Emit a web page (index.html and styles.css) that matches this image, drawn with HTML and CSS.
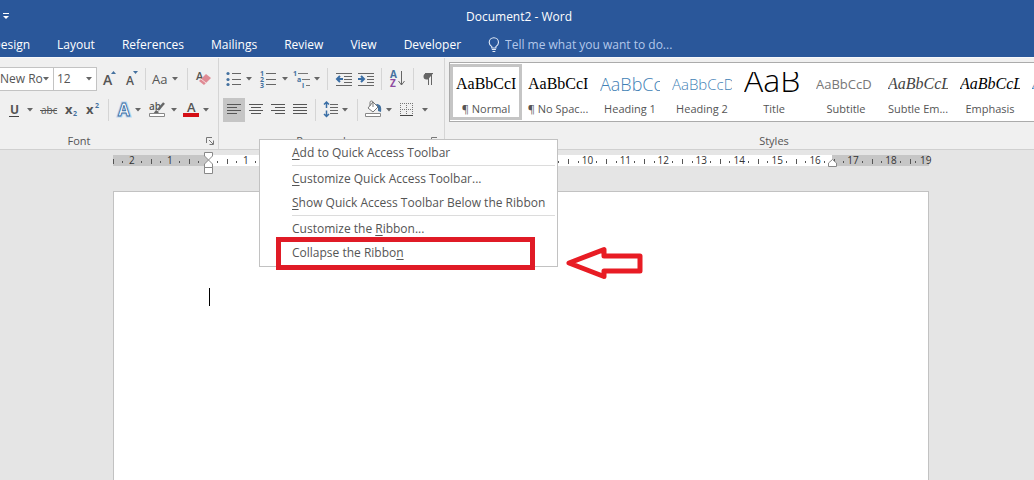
FILE: index.html
```html
<!DOCTYPE html>
<html lang="en">
<head>
<meta charset="utf-8">
<title>Document2 - Word</title>
<link rel="stylesheet" href="styles.css">
</head>
<body>
<header class="titlebar">
  <div class="title-row">
    <button class="qat" aria-label="Customize Quick Access Toolbar"><svg width="8" height="8" viewBox="0 0 8 8"><path d="M1 .5h6" stroke="#fff"/><path d="M1 3h6L4 6z" fill="#fff"/></svg></button>
    <h1 class="doc-title">Document2 - Word</h1>
  </div>
  <nav class="tabs">
    <button class="tab">Design</button>
    <button class="tab">Layout</button>
    <button class="tab">References</button>
    <button class="tab">Mailings</button>
    <button class="tab">Review</button>
    <button class="tab">View</button>
    <button class="tab">Developer</button>
    <label class="tell">
      <svg width="12" height="16" viewBox="0 0 12 16" fill="none" stroke="#e4ecf8" stroke-width="1.1"><path d="M3.8 11V9.6C2.300 8.500 1.200 7.300 1.200 5.400a4.600 4.600 0 0 1 9.300 0c0 1.900-1.100 3.100-2.600 4.200V11zM3.800 12.500h4.100M4.500 14.500h2.800"/></svg>
      <input type="text" placeholder="Tell me what you want to do..." aria-label="Tell me what you want to do">
    </label>
  </nav>
</header>

<section class="ribbon" aria-label="Ribbon">
  <div class="group font-group">
    <div class="tools">
      <div class="row">
        <span class="combo face"><select aria-label="Font"><option>New Ro</option></select><svg class="arrow" viewBox="0 0 6 4"><path d="M0 0h6L3 3.500z"/></svg></span>
        <span class="combo size"><select aria-label="Font size"><option>12</option></select><svg class="arrow" viewBox="0 0 6 4"><path d="M0 0h6L3 3.500z"/></svg></span>
        <button class="tool first" aria-label="Grow font"><svg width="22" height="24" viewBox="0 0 22 24"><text x="4" y="18" class="g" font-size="14">A</text><path d="M12 7h5l-2.500-3z" fill="#44719f"/></svg></button>
        <button class="tool" aria-label="Shrink font"><svg width="20" height="24" viewBox="0 0 20 24"><text x="5" y="18" class="g" font-size="12">A</text><path d="M12 4h5l-2.500 3z" fill="#44719f"/></svg></button>
        <i class="sep"></i>
        <button class="tool" aria-label="Change case"><svg width="20" height="24" viewBox="0 0 20 24"><text x="3" y="17" class="m" font-size="13">Aa</text></svg></button>
        <button class="drop" aria-label="Case options"><svg class="arrow" viewBox="0 0 6 4"><path d="M0 0h6L3 3.500z"/></svg></button>
        <i class="sep wide"></i>
        <button class="tool" aria-label="Clear formatting"><svg width="20" height="24" viewBox="0 0 20 24"><text x="3" y="13" class="g" font-size="11">A</text><path d="m6 14 7-7 5 4-7 7z" fill="#df8a94"/><path d="m8 12 5 4" stroke="#f6d9dc"/></svg></button>
      </div>
      <div class="row inset">
        <button class="tool" aria-label="Underline"><svg width="20" height="24" viewBox="0 0 20 24"><text x="6" y="16" class="g b" font-size="12">U</text><path d="M5 18.500h10" stroke="#444"/></svg></button>
        <button class="drop" aria-label="Underline styles"><svg class="arrow" viewBox="0 0 6 4"><path d="M0 0h6L3 3.500z"/></svg></button>
        <button class="tool" aria-label="Strikethrough"><svg width="24" height="24" viewBox="0 0 24 24"><text x="5" y="16" class="m" font-size="10">abc</text><path d="M4 12.500h17" stroke="#555"/></svg></button>
        <button class="tool" aria-label="Subscript"><svg width="22" height="24" viewBox="0 0 22 24"><text x="5" y="16" class="g b" font-size="13">x</text><text x="13" y="18" class="n" font-size="7">2</text></svg></button>
        <button class="tool" aria-label="Superscript"><svg width="22" height="24" viewBox="0 0 22 24"><text x="4" y="16" class="g b" font-size="13">x</text><text x="13" y="10" class="n" font-size="7">2</text></svg></button>
        <i class="sep"></i>
        <button class="tool" aria-label="Text effects"><svg width="20" height="24" viewBox="0 0 20 24" font-weight="700"><text x="6" y="18" font-size="17" fill="#fff" stroke="#bcd8f0" stroke-width="3">A</text><text x="6" y="18" font-size="17" fill="#fff" stroke="#3a6ea5" stroke-width=".9">A</text></svg></button>
        <button class="drop" aria-label="Effect options"><svg class="arrow" viewBox="0 0 6 4"><path d="M0 0h6L3 3.500z"/></svg></button>
        <button class="tool" aria-label="Highlight"><svg width="24" height="24" viewBox="0 0 24 24"><text x="5" y="12" class="g" font-size="10">ab</text><path d="m20 5-6 7" stroke="#666" stroke-width="2.500"/><path d="m9 16 3-4 3 2-2 2z" fill="#666"/><path d="M5.500 15.500h15v3h-15z" fill="#fff" stroke="#888"/></svg></button>
        <button class="drop" aria-label="Highlight colors"><svg class="arrow" viewBox="0 0 6 4"><path d="M0 0h6L3 3.500z"/></svg></button>
        <button class="tool" aria-label="Font color"><svg width="20" height="24" viewBox="0 0 20 24"><text x="7" y="14" class="g" font-size="13">A</text><path d="M3 15h16v4H3z" fill="#d40f16"/></svg></button>
        <button class="drop" aria-label="Font colors"><svg class="arrow" viewBox="0 0 6 4"><path d="M0 0h6L3 3.500z"/></svg></button>
      </div>
    </div>
    <div class="caption font-caption"><span>Font</span><button class="launch" aria-label="Font settings"><svg width="8" height="8" viewBox="0 0 8 8" fill="none" stroke="#777"><path d="M.5 6V.5H6M3 3l4 4M7.500 3.500v4h-4"/></svg></button></div>
  </div>

  <div class="group para-group">
    <div class="tools">
      <div class="row">
        <button class="tool" aria-label="Bullets"><svg width="20" height="24" viewBox="0 0 20 24"><path d="M9 6.500h9M9 12.500h9M9 17.500h9" stroke="#666"/><g fill="#44719f"><circle cx="5" cy="6.500" r="1.600"/><circle cx="5" cy="12.500" r="1.600"/><circle cx="5" cy="17.500" r="1.600"/></g></svg></button>
        <button class="drop" aria-label="Bullet library"><svg class="arrow" viewBox="0 0 6 4"><path d="M0 0h6L3 3.500z"/></svg></button>
        <button class="tool" aria-label="Numbering"><svg width="24" height="24" viewBox="0 0 24 24"><path d="M11 6.500h10M11 12.500h10M11 17.500h10" stroke="#666"/><g class="n" font-size="7"><text x="5" y="9">1</text><text x="5" y="15">2</text><text x="5" y="21">3</text></g></svg></button>
        <button class="drop" aria-label="Numbering library"><svg class="arrow" viewBox="0 0 6 4"><path d="M0 0h6L3 3.500z"/></svg></button>
        <button class="tool" aria-label="Multilevel list"><svg width="20" height="24" viewBox="0 0 20 24"><path d="M7 6.500h10M11 12.500h8M15 18.500h4" stroke="#777"/><g class="n" font-size="7"><text x="2" y="9">1</text><text x="6" y="15">a</text><text x="11" y="21">i</text></g></svg></button>
        <button class="drop" aria-label="List library"><svg class="arrow" viewBox="0 0 6 4"><path d="M0 0h6L3 3.500z"/></svg></button>
        <i class="sep"></i>
        <button class="tool" aria-label="Decrease indent"><svg width="24" height="24" viewBox="0 0 24 24"><path d="M5 6.500h16M13 9.500h8M13 12.500h8M13 15.500h8M5 18.500h16" stroke="#666"/><path d="M12 12H6m3-3-3 3 3 3" fill="none" stroke="#3a6ea5" stroke-width="2"/></svg></button>
        <button class="tool" aria-label="Increase indent"><svg width="22" height="24" viewBox="0 0 22 24"><path d="M3 6.500h16M12 9.500h7M12 12.500h7M12 15.500h7M3 18.500h16" stroke="#666"/><path d="M3 12h6M6 9l3 3-3 3" fill="none" stroke="#3a6ea5" stroke-width="2"/></svg></button>
        <i class="sep"></i>
        <button class="tool" aria-label="Sort"><svg width="24" height="24" viewBox="0 0 24 24"><text x="5" y="11" font-size="10" class="n">A</text><text x="5" y="20" font-size="10" class="b" fill="#8d4aa0">Z</text><path d="M16.500 4v14m-3-4 3 4 3-4" fill="none" stroke="#666"/></svg></button>
        <i class="sep"></i>
        <button class="tool" aria-label="Show paragraph marks"><svg width="22" height="24" viewBox="0 0 22 24"><path d="M16 6.500H9.500a3 3 0 0 0 0 6H11" fill="#666"/><path d="M8 6.500h8M11.500 6v12M14.500 6v12" stroke="#666"/></svg></button>
      </div>
      <div class="row">
        <button class="tool on" aria-label="Align left"><svg width="22" height="24" viewBox="0 0 22 24"><path d="M4 6.500h14M4 9.500h10M4 12.500h14M4 15.500h10" stroke="#555"/></svg></button>
        <button class="tool" aria-label="Center"><svg width="22" height="24" viewBox="0 0 22 24"><path d="M4 6.500h14M6 9.500h10M4 12.500h14M6 15.500h10" stroke="#555"/></svg></button>
        <button class="tool" aria-label="Align right"><svg width="22" height="24" viewBox="0 0 22 24"><path d="M4 6.500h14M8 9.500h10M4 12.500h14M8 15.500h10" stroke="#555"/></svg></button>
        <button class="tool" aria-label="Justify"><svg width="22" height="24" viewBox="0 0 22 24"><path d="M4 6.500h14M4 9.500h14M4 12.500h14M4 15.500h14" stroke="#555"/></svg></button>
        <i class="sep"></i>
        <button class="tool" aria-label="Line spacing"><svg width="20" height="24" viewBox="0 0 20 24"><path d="M11 6.500h8M11 9.500h8M11 12.500h8M11 15.500h8" stroke="#666"/><path d="M7.500 10V4M5 6.500 7.500 4 10 6.500M7.500 12.500v6M5 16l2.500 2.500L10 16" fill="none" stroke="#3a6ea5" stroke-width="1.500"/></svg></button>
        <button class="drop" aria-label="Spacing options"><svg class="arrow" viewBox="0 0 6 4"><path d="M0 0h6L3 3.500z"/></svg></button>
        <i class="sep wide"></i>
        <button class="tool" aria-label="Shading"><svg width="20" height="24" viewBox="0 0 20 24"><path d="m5 10 5-6 5 5-5 5z" fill="#fff" stroke="#777"/><path d="M7 8V4.500a1.500 1.500 0 0 1 3 0V9" fill="none" stroke="#777"/><path d="M13 6c4 0 6 2 5 8l-3-1V9z" fill="#44719f"/><path d="M2.500 15.500h15v3h-15z" fill="#fff" stroke="#888"/></svg></button>
        <button class="drop" aria-label="Shading colors"><svg class="arrow" viewBox="0 0 6 4"><path d="M0 0h6L3 3.500z"/></svg></button>
        <button class="tool" aria-label="Borders"><svg width="24" height="24" viewBox="0 0 24 24" fill="none" stroke="#777"><path d="M5.500 5v12M11.500 5v12M17.500 5v12M5 5.500h13M5 11.500h13" stroke-dasharray="1 1"/><path d="M5 17.500h13" stroke="#444"/></svg></button>
        <button class="drop" aria-label="Border options"><svg class="arrow" viewBox="0 0 6 4"><path d="M0 0h6L3 3.500z"/></svg></button>
      </div>
    </div>
    <div class="caption para-caption"><span>Paragraph</span><button class="launch" aria-label="Paragraph settings"><svg width="8" height="8" viewBox="0 0 8 8" fill="none" stroke="#777"><path d="M.5 6V.5H6M3 3l4 4M7.500 3.500v4h-4"/></svg></button></div>
  </div>

  <div class="group style-group">
    <div class="gallery">
      <button class="style chosen"><span class="sample serif">AaBbCcI</span><span class="name">¶ Normal</span></button>
      <button class="style"><span class="sample serif">AaBbCcI</span><span class="name">¶ No Spac...</span></button>
      <button class="style"><span class="sample h1">AaBbCc</span><span class="name">Heading 1</span></button>
      <button class="style"><span class="sample h2">AaBbCcD</span><span class="name">Heading 2</span></button>
      <button class="style"><span class="sample title">AaB</span><span class="name">Title</span></button>
      <button class="style"><span class="sample subtitle">AaBbCcD</span><span class="name">Subtitle</span></button>
      <button class="style"><span class="sample serif subtle">AaBbCcL</span><span class="name">Subtle Em...</span></button>
      <button class="style"><span class="sample serif emphasis">AaBbCcL</span><span class="name">Emphasis</span></button>
      <button class="style"><span class="sample serif intense">AaBbCcL</span><span class="name">Intense E...</span></button>
    </div>
    <div class="caption style-caption"><span>Styles</span></div>
  </div>
</section>

<main class="desk">
  <div class="ruler">
    <ol class="marks">
      <li>2</li><li>1</li><li></li><li>1</li><li>2</li><li>3</li><li>4</li><li>5</li><li>6</li><li>7</li><li>8</li><li>9</li><li>10</li><li>11</li><li>12</li><li>13</li><li>14</li><li>15</li><li>16</li><li>17</li><li>18</li><li class="half">19</li>
    </ol>
    <svg class="indent-left" width="9" height="22" viewBox="0 0 9 22" fill="#fff" stroke="#888"><path d="M.5.500h8V4l-4 4-4-4zM.5 15.500V12l4-4 4 4v3.500zM.5 15.500h8v6h-8z"/></svg>
    <svg class="indent-right" width="9" height="8" viewBox="0 0 9 8" fill="#fff" stroke="#888"><path d="M.5 7.500V4l4-3.500 4 3.500v3.500z"/></svg>
  </div>
  <article class="page" aria-label="Document page"><span class="caret"></span></article>
</main>

<div class="menu" role="menu">
  <button class="item" role="menuitem"><u>A</u>dd to Quick Access Toolbar</button>
  <hr>
  <button class="item" role="menuitem"><u>C</u>ustomize Quick Access Toolbar...</button>
  <button class="item" role="menuitem"><u>S</u>how Quick Access Toolbar Below the Ribbon</button>
  <hr>
  <button class="item" role="menuitem">Customize the <u>R</u>ibbon...</button>
  <button class="item" role="menuitem">Collapse the Ribbo<u>n</u></button>
  <div class="callout"></div>
  <svg class="pointer" width="78" height="34" viewBox="0 0 78 34"><path d="M3 17 38 3.500V10h36v15H38v5.500z" fill="#fff" stroke="#e81c24" stroke-width="5" stroke-linejoin="round"/></svg>
</div>
</body>
</html>
```
FILE: styles.css
```css
* { box-sizing: border-box; }

body {
  margin: 0;
  min-height: 100vh;
  display: flex;
  flex-direction: column;
  overflow: hidden;
  position: relative;
  background: #e5e5e5;
  color: #555;
  font: 12px/16px "Open Sans", "Noto Sans", sans-serif;
}

button, input, select {
  margin: 0;
  padding: 0;
  border: 0;
  background: none;
  color: inherit;
  font: inherit;
}

svg { display: block; flex: none; }

.titlebar { background: #2a579a; color: #fff; }
.title-row { display: flex; align-items: center; height: 32px; padding: 2px 0 0 2px; }
.qat { width: 8px; }
.doc-title { flex: 1; margin: 0; padding-right: 6px; text-align: center; font-size: 12px; font-weight: 400; }
.tabs { display: flex; align-items: center; height: 25px; gap: 27px; margin-left: -8px; white-space: nowrap; }
.tell { display: flex; align-items: center; gap: 5px; flex: 1; }
.tell input { flex: 1; min-width: 0; outline: 0; }
.tell input::placeholder { color: #b3c8ea; opacity: 1; }

.ribbon { display: flex; height: 93px; background: #f0f0f0; border-top: 1px solid #f8f9fc; border-bottom: 1px solid #d0d0d0; }
.group { display: flex; flex-direction: column; flex: none; padding-top: 4px; }
.font-group { width: 219px; border-right: 1px solid #d5d5d5; }
.para-group { width: 226px; padding-left: 4px; border-right: 1px solid #d5d5d5; }
.group.style-group { flex: 1; min-width: 0; padding-left: 4px; justify-content: space-between; }
.tools { flex: 1; display: flex; flex-direction: column; gap: 7px; padding-top: 5px; }
.row { display: flex; align-items: center; height: 24px; }
.inset { padding-left: 4px; }
.combo { display: flex; align-items: center; height: 24px; padding-right: 4px; background: #fff; border: 1px solid #c3c3c3; }
.combo select { flex: 1; min-width: 0; appearance: none; outline: 0; }
.face { width: 54px; border-left: 0; }
.size { width: 43px; border-left: 0; padding-left: 3px; }
.arrow { width: 6px; height: 4px; fill: #666; }
.first { margin-left: 2px; }
.on { background: #c5c5c5; }
.drop { display: flex; justify-content: center; width: 12px; }
.sep { width: 8px; height: 22px; background: linear-gradient(#d5d5d5, #d5d5d5) center / 1px 100% no-repeat; }
.wide { width: 12px; }
.m { fill: #555; }
.g { fill: #555; font-weight: 600; }
.b { font-weight: 700; }
.n { fill: #44719f; font-weight: 700; }
.caption { display: flex; align-items: center; height: 16px; font-size: 11px; line-height: 16px; }
.caption span { flex: 1; text-align: center; }
.font-caption { padding: 0 4px 0 0; }
.font-caption span { padding-right: 48px; }
.para-caption { padding-right: 5px; }
.para-caption span { padding-right: 8px; }
.style-caption { padding-left: 65px; }

.gallery { display: flex; height: 60px; overflow: hidden; background: #fff; border: 1px solid #ababab; border-right: 0; }
.style { flex: none; width: 72px; height: 56px; margin-top: 1px; padding: 8px 4px 0; display: flex; flex-direction: column; align-items: center; }
.chosen { padding: 5px 1px 0; border: 3px solid #c5c5c5; }
.sample { flex: none; width: 60px; height: 24px; overflow: hidden; line-height: 24px; text-align: left; white-space: nowrap; color: #000; }
.name { line-height: 26px; white-space: nowrap; font-size: 11px; }
.serif { font-family: "Liberation Serif", serif; font-size: 16px; }
.h1 { color: #3f7fb5; font-size: 18px; font-weight: 300; }
.h2 { color: #3f7fb5; font-size: 15px; font-weight: 300; }
.title { font-size: 32px; font-weight: 300; line-height: 16px; }
.subtitle { color: #777; font-size: 13px; }
.subtle { color: #444; font-style: italic; }
.emphasis { font-style: italic; }
.intense { color: #3f7fb5; font-style: italic; }

.desk { flex: 1; display: flex; flex-direction: column; padding: 5px 105px 0 113px; }
.ruler { position: relative; height: 11px; margin-bottom: 25px; }
.marks {
  display: flex;
  margin: 0;
  padding: 0;
  list-style: none;
  height: 11px;
  background: linear-gradient(90deg, #c6c6c6 11.7%, #fff 11.7% 88.1%, #c6c6c6 88.1%);
  color: #333;
  font-size: 10px;
  line-height: 11px;
}
.marks li {
  flex: 2 0 0;
  min-width: 0;
  text-align: center;
  background:
    linear-gradient(#555, #555) 0 4px / 1px 5px no-repeat,
    linear-gradient(#555, #555) 25% 6px / 1px 2px no-repeat,
    linear-gradient(#555, #555) 75% 6px / 1px 2px no-repeat;
}
.marks .half {
  flex-grow: 1;
  text-align: left;
  text-indent: 10px;
  background:
    linear-gradient(#555, #555) 0 4px / 1px 5px no-repeat,
    linear-gradient(#555, #555) 30% 6px / 1px 2px no-repeat;
}
.indent-left { position: absolute; left: calc(11.7% - 4px); top: -3px; }
.indent-right { position: absolute; left: calc(88.1% - 4px); top: 4px; }
.page { flex: 1; padding: 96px 95px; background: #fff; border: 1px solid #c2c2c2; border-bottom: 0; }
.caret { display: block; width: 1px; height: 18px; background: #000; }

.menu {
  position: absolute;
  left: 259px;
  top: 139px;
  width: 299px;
  padding: 1px 0;
  display: flex;
  flex-direction: column;
  background: #fff;
  border: 1px solid #c2c2c2;
}
.item { height: 24px; padding-left: 32px; text-align: left; white-space: nowrap; }
.item u { text-underline-offset: 2px; }
.menu hr { width: calc(100% - 34px); height: 1px; margin: 0 0 1px 32px; border: 0; background: #dcdcdc; }
.callout { position: absolute; left: 16px; top: 97px; width: 259px; height: 33px; border: 5px solid #e01b26; }
.pointer { position: absolute; left: 306px; top: 106px; }
```
